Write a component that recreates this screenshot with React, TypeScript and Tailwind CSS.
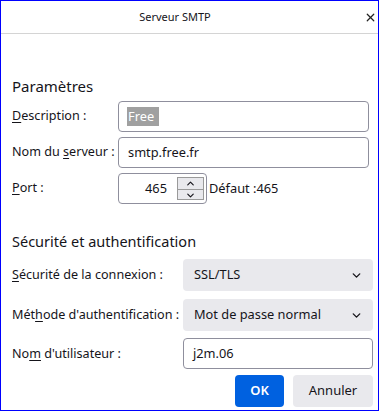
import { ChevronDown, ChevronUp, X } from 'lucide-react';

function Label({ pre, key_, post }: { pre: string; key_: string; post: string }) {
  return (
    <span className="text-[12.6px] whitespace-nowrap text-[#15141a]">
      {pre}
      <span className="underline underline-offset-2">{key_}</span>
      {post}
    </span>
  );
}

function SelectBox({ value }: { value: string }) {
  return (
    <div className="flex h-[32px] items-center justify-between rounded-[4px] bg-[#e9e9ed] pr-[10px] pl-[11px] text-[12.8px] text-[#15141a]">
      <span>{value}</span>
      <ChevronDown size={13} strokeWidth={2.5} />
    </div>
  );
}

export default function App() {
  return (
    <div
      className="flex h-[411px] w-[379px] flex-col border border-[#0000ff] bg-white text-[#15141a]"
      style={{ fontFamily: '"Noto Sans", "Open Sans", sans-serif' }}
    >
      {/* Title bar */}
      <div className="relative flex h-[33px] shrink-0 items-center justify-center border-b border-[#d4d4d4] pr-[29px]">
        <span className="text-[11px]">Serveur SMTP</span>
        <X size={13} strokeWidth={2.2} className="absolute top-[10px] right-[1px] text-[#222]" />
      </div>

      <div className="flex flex-col pr-[9px] pl-[11px]">
        {/* Paramètres */}
        <h2 className="mt-[41px] mb-[4px] text-[15px] leading-[22px]">Paramètres</h2>

        <div className="grid grid-cols-[106px_1fr] items-center gap-y-[5px]">
          <Label pre="" key_="D" post="escription :" />
          <div className="flex h-[31px] items-center rounded-[4px] border border-[#8f8f9d] pl-[8px] text-[12.8px]">
            <span className="bg-[#a0a0a0] px-px pr-[5px] text-white">Free</span>
          </div>

          <Label pre="Nom du " key_="s" post="erveur :" />
          <div className="flex h-[31px] items-center rounded-[4px] border border-[#8f8f9d] pl-[9px] text-[12.8px]">
            smtp.free.fr
          </div>

          <Label pre="" key_="P" post="ort :" />
          <div className="flex items-center">
            <div className="flex h-[31px] w-[89px] items-center rounded-[4px] border border-[#8f8f9d] pr-[2px] text-[12.8px]">
              <span className="flex-1 pr-[10px] text-right">465</span>
              <div className="flex h-[23px] w-[27px] flex-col border border-[#9a9a9a] bg-[#e9e9ed]">
                <div className="flex flex-1 items-center justify-center border-b border-[#9a9a9a]">
                  <ChevronUp size={11} strokeWidth={2.5} />
                </div>
                <div className="flex flex-1 items-center justify-center">
                  <ChevronDown size={11} strokeWidth={2.5} />
                </div>
              </div>
            </div>
            <span className="ml-[2px] text-[12.8px]">Défaut :465</span>
          </div>
        </div>

        {/* Sécurité et authentification */}
        <h2 className="mt-[26px] mb-[7px] text-[14.5px] leading-[22px]">Sécurité et authentification</h2>

        <div className="mr-[-4px] grid grid-cols-[171px_1fr] items-center gap-y-[8px]">
          <Label pre="" key_="S" post="écurité de la connexion :" />
          <SelectBox value="SSL/TLS" />

          <Label pre="Mét" key_="h" post="ode d'authentification :" />
          <SelectBox value="Mot de passe normal" />

          <Label pre="No" key_="m" post=" d'utilisateur :" />
          <div className="-mt-[1px] flex h-[31px] items-center rounded-[4px] border border-[#8f8f9d] pl-[9px] text-[12.8px]">
            j2m.06
          </div>
        </div>

        {/* Buttons */}
        <div className="mt-[6px] mr-[-4px] flex justify-end gap-[9px]">
          <button className="h-[32px] w-[49px] rounded-[4px] bg-[#0061e0] text-[13px] font-semibold text-white">
            OK
          </button>
          <button className="h-[32px] w-[80px] rounded-[4px] bg-[#e9e9ed] text-[13px] text-[#15141a]">
            Annuler
          </button>
        </div>
      </div>
    </div>
  );
}
